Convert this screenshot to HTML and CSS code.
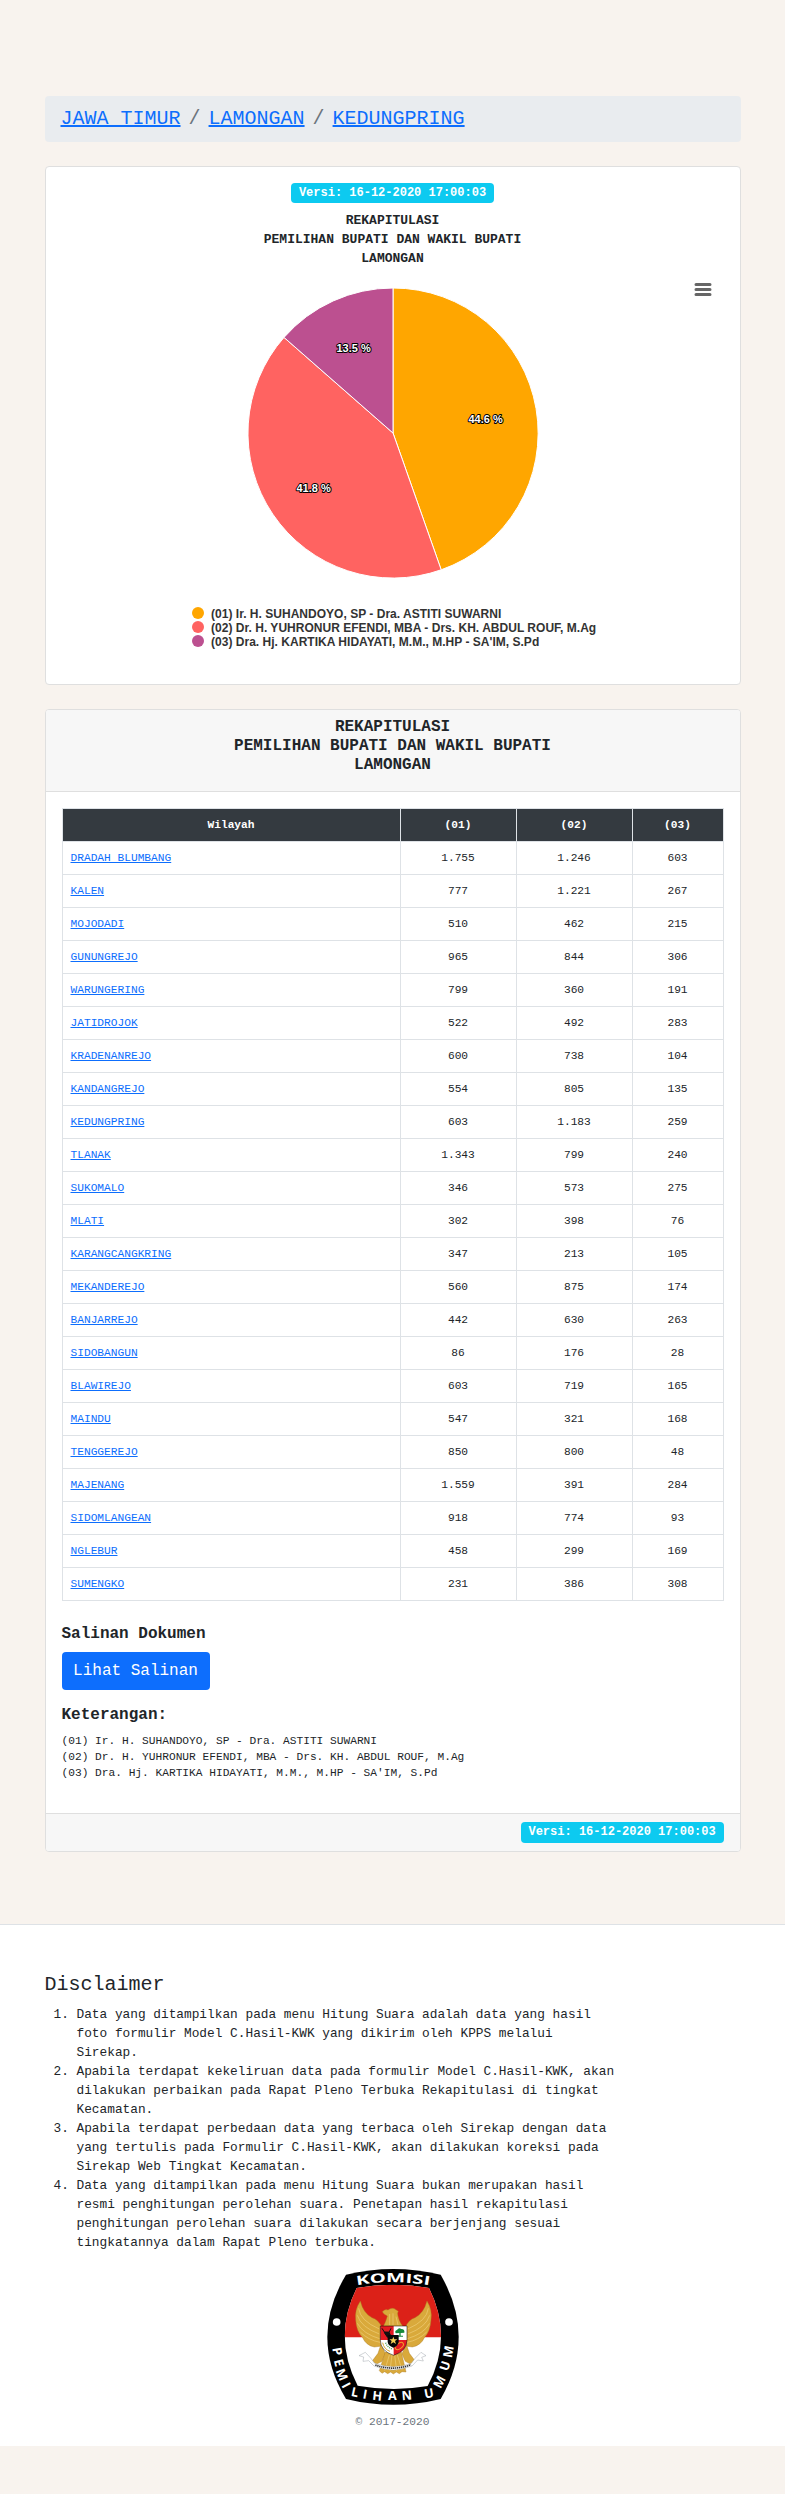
FILE: index.html
```html
<!DOCTYPE html>
<html lang="id">
<head>
<meta charset="utf-8">
<title>Rekapitulasi Pemilihan Bupati dan Wakil Bupati Lamongan</title>
<link rel="stylesheet" href="styles.css">
</head>
<body>
<main class="container">
  <nav class="breadcrumb">
    <a href="#">JAWA TIMUR</a><span class="sep">/</span><a href="#">LAMONGAN</a><span class="sep">/</span><a href="#">KEDUNGPRING</a>
  </nav>

  <section class="card chart-card">
    <div class="chart-head">
      <span class="badge">Versi: 16-12-2020 17:00:03</span>
      <h6 class="chart-title">REKAPITULASI<br>PEMILIHAN BUPATI DAN WAKIL BUPATI<br>LAMONGAN</h6>
    </div>
    <svg class="chart" viewBox="62 268 662 400" width="662" height="400">
      <g stroke="#fff" stroke-width="1" stroke-linejoin="round">
        <path fill="#ffa600" d="M393 433V288A145 145 0 0 1 441.2 569.8Z"/>
        <path fill="#ff6361" d="M393 433L441.2 569.8A145 145 0 0 1 284 337.4Z"/>
        <path fill="#bc5090" d="M393 433L284 337.4A145 145 0 0 1 393 288Z"/>
      </g>
      <g class="slice-label">
        <text x="468.5" y="423">44.6 %</text>
        <text x="296.5" y="492">41.8 %</text>
        <text x="336.5" y="352">13.5 %</text>
      </g>
      <path d="M696 284.5H710M696 289.5H710M696 294.5H710" stroke="#666" stroke-width="3" stroke-linecap="round"/>
      <circle cx="198" cy="613" r="6" fill="#ffa600"/>
      <circle cx="198" cy="627" r="6" fill="#ff6361"/>
      <circle cx="198" cy="641" r="6" fill="#bc5090"/>
      <g class="legend">
        <text x="211" y="618">(01) Ir. H. SUHANDOYO, SP - Dra. ASTITI SUWARNI</text>
        <text x="211" y="632">(02) Dr. H. YUHRONUR EFENDI, MBA - Drs. KH. ABDUL ROUF, M.Ag</text>
        <text x="211" y="646">(03) Dra. Hj. KARTIKA HIDAYATI, M.M., M.HP - SA'IM, S.Pd</text>
      </g>
    </svg>
  </section>

  <section class="card result-card">
    <header class="card-header">
      <h6>REKAPITULASI<br>PEMILIHAN BUPATI DAN WAKIL BUPATI<br>LAMONGAN</h6>
    </header>
    <div class="card-body">
      <table class="results">
        <colgroup><col class="c-name"><col class="c-num"><col class="c-num"><col class="c-last"></colgroup>
        <thead><tr><th>Wilayah</th><th>(01)</th><th>(02)</th><th>(03)</th></tr></thead>
        <tbody>
          <tr><td><a href="#">DRADAH BLUMBANG</a></td><td>1.755</td><td>1.246</td><td>603</td></tr>
          <tr><td><a href="#">KALEN</a></td><td>777</td><td>1.221</td><td>267</td></tr>
          <tr><td><a href="#">MOJODADI</a></td><td>510</td><td>462</td><td>215</td></tr>
          <tr><td><a href="#">GUNUNGREJO</a></td><td>965</td><td>844</td><td>306</td></tr>
          <tr><td><a href="#">WARUNGERING</a></td><td>799</td><td>360</td><td>191</td></tr>
          <tr><td><a href="#">JATIDROJOK</a></td><td>522</td><td>492</td><td>283</td></tr>
          <tr><td><a href="#">KRADENANREJO</a></td><td>600</td><td>738</td><td>104</td></tr>
          <tr><td><a href="#">KANDANGREJO</a></td><td>554</td><td>805</td><td>135</td></tr>
          <tr><td><a href="#">KEDUNGPRING</a></td><td>603</td><td>1.183</td><td>259</td></tr>
          <tr><td><a href="#">TLANAK</a></td><td>1.343</td><td>799</td><td>240</td></tr>
          <tr><td><a href="#">SUKOMALO</a></td><td>346</td><td>573</td><td>275</td></tr>
          <tr><td><a href="#">MLATI</a></td><td>302</td><td>398</td><td>76</td></tr>
          <tr><td><a href="#">KARANGCANGKRING</a></td><td>347</td><td>213</td><td>105</td></tr>
          <tr><td><a href="#">MEKANDEREJO</a></td><td>560</td><td>875</td><td>174</td></tr>
          <tr><td><a href="#">BANJARREJO</a></td><td>442</td><td>630</td><td>263</td></tr>
          <tr><td><a href="#">SIDOBANGUN</a></td><td>86</td><td>176</td><td>28</td></tr>
          <tr><td><a href="#">BLAWIREJO</a></td><td>603</td><td>719</td><td>165</td></tr>
          <tr><td><a href="#">MAINDU</a></td><td>547</td><td>321</td><td>168</td></tr>
          <tr><td><a href="#">TENGGEREJO</a></td><td>850</td><td>800</td><td>48</td></tr>
          <tr><td><a href="#">MAJENANG</a></td><td>1.559</td><td>391</td><td>284</td></tr>
          <tr><td><a href="#">SIDOMLANGEAN</a></td><td>918</td><td>774</td><td>93</td></tr>
          <tr><td><a href="#">NGLEBUR</a></td><td>458</td><td>299</td><td>169</td></tr>
          <tr><td><a href="#">SUMENGKO</a></td><td>231</td><td>386</td><td>308</td></tr>
        </tbody>
      </table>
      <h6>Salinan Dokumen</h6>
      <button class="btn" type="button">Lihat Salinan</button>
      <h6>Keterangan:</h6>
      <p class="notes">(01) Ir. H. SUHANDOYO, SP - Dra. ASTITI SUWARNI<br>(02) Dr. H. YUHRONUR EFENDI, MBA - Drs. KH. ABDUL ROUF, M.Ag<br>(03) Dra. Hj. KARTIKA HIDAYATI, M.M., M.HP - SA'IM, S.Pd</p>
    </div>
    <footer class="card-footer"><span class="badge">Versi: 16-12-2020 17:00:03</span></footer>
  </section>
</main>

<footer class="site-footer">
  <h5>Disclaimer</h5>
  <ol class="disclaimer">
    <li>Data yang ditampilkan pada menu Hitung Suara adalah data yang hasil foto formulir Model C.Hasil-KWK yang dikirim oleh KPPS melalui Sirekap.</li>
    <li>Apabila terdapat kekeliruan data pada formulir Model C.Hasil-KWK, akan dilakukan perbaikan pada Rapat Pleno Terbuka Rekapitulasi di tingkat Kecamatan.</li>
    <li>Apabila terdapat perbedaan data yang terbaca oleh Sirekap dengan data yang tertulis pada Formulir C.Hasil-KWK, akan dilakukan koreksi pada Sirekap Web Tingkat Kecamatan.</li>
    <li>Data yang ditampilkan pada menu Hitung Suara bukan merupakan hasil resmi penghitungan perolehan suara. Penetapan hasil rekapitulasi penghitungan perolehan suara dilakukan secara berjenjang sesuai tingkatannya dalam Rapat Pleno terbuka.</li>
  </ol>
  <div class="brand">
    <svg class="logo" viewBox="51 57 396 408" width="132" height="136">
      <defs>
        <path id="arcTop" d="M140 106Q250 86 362 107"/>
        <clipPath id="field"><path d="M140 114Q250 94 357 114Q431 262 353 408Q250 426 143 407Q67 262 140 114Z"/></clipPath>
      </defs>
      <path d="M108 74Q250 40 392 74Q500 262 392 447Q250 482 108 447Q-4 262 108 74Z"/>
      <g clip-path="url(#field)">
        <path fill="#fff" d="M60 90H440V440H60Z"/>
        <path fill="#dc2118" d="M60 90H440V262H60Z"/>
      </g>
      <circle cx="80" cy="216" r="11.5" fill="#fff"/>
      <circle cx="417" cy="216" r="11.5" fill="#fff"/>
      <g class="logo-text">
        <text><textPath href="#arcTop" textLength="220" lengthAdjust="spacingAndGlyphs">KOMISI</textPath></text>
        <text x="66.8 71.2 76.8 94.1 121.8 156.5 186 234 275.8 320 345 391.4 413.3 425.3" y="294.5 331.3 362.3 406.8 437 445 449 450.5 450.8 448 445.8 418 365 325" rotate="80 75 68 62 12 10 6 0 -5 -8 -10 -62 -72 -80">PEMILIHAN UMUM</text>
      </g>
      <g fill="#d9a93b" stroke="#a87820" stroke-width="1.2" stroke-linejoin="round">
        <path d="M151 153Q133 180 137 210Q139 245 158 263Q168 286 193 291L216 288V232Q205 208 186 203Q160 190 151 153Z"/>
        <path d="M351 153Q368 180 363 210Q361 245 343 263Q333 286 307 291L286 288V232Q296 208 315 203Q341 190 351 153Z"/>
        <path d="M214 240Q228 216 232 198L222 192L217 185Q226 176 234 180Q246 170 258 179L265 184Q260 190 264 198Q268 220 288 240Z"/>
        <path d="M214 280L204 310L186 334L200 342L216 334L226 312ZM288 280L298 310L316 334L302 342L286 334L276 312Z"/>
        <path d="M226 306L208 362L216 370L224 365L233 371L242 366L250 372L259 366L268 371L276 365L288 366L274 306Z"/>
      </g>
      <g fill="none" stroke="#f0cf78" stroke-width="2">
        <path d="M146 175Q150 212 208 237M142 196Q153 232 208 252M142 220Q160 252 209 266M151 246Q174 270 210 277M355 175Q351 212 293 237M359 196Q348 232 293 252M359 220Q341 252 292 266M350 246Q327 270 291 277"/>
        <path d="M238 315L224 362M246 315L240 362M254 315L260 362M262 315L276 360M239 192V225M249 190V225M258 200L264 225"/>
      </g>
      <path fill="#fff" stroke="#8a9299" stroke-width="1.2" d="M147 317L166 307L182 324L194 340Q222 350 250 350Q280 350 304 340L316 324L333 307L348 317L335 322L340 333L323 330L306 348Q278 358 250 360Q222 359 192 348L176 332L159 334L161 321Z"/>
      <path fill="none" stroke="#333" stroke-width="5" stroke-dasharray="4 2" d="M196 345Q250 364 303 344"/>
      <path fill="#fff" d="M211 228H291V270Q291 303 251 316Q211 303 211 270Z"/>
      <path fill="#e21b22" d="M211 228H251V270H211ZM251 270H291Q291 303 251 316Z"/>
      <path fill="none" stroke="#000" stroke-width="1.5" d="M211 228H291V270Q291 303 251 316Q211 303 211 270Z"/>
      <path fill="none" stroke="#111" stroke-width="3" d="M216 235L223 246L237 247L243 235M224 250L232 260L242 256"/>
      <path fill="#111" d="M221 246L238 245L243 256L232 263Z"/>
      <path fill="#168a3b" d="M257 250Q253 242 261 240Q266 232 274 237Q285 238 283 248L272 249V257H279V260H262V257H268V249Z"/>
      <path fill="none" stroke="#d9a93b" stroke-width="3" d="M218 278Q222 298 240 304"/>
      <path fill="none" stroke="#3b974d" stroke-width="4" stroke-dasharray="3 3" d="M227 278Q232 292 246 297"/>
      <ellipse cx="268" cy="288" rx="14" ry="8" transform="rotate(-38 268 288)" fill="none" stroke="#eea02b" stroke-width="3"/>
      <path fill="#080808" d="M233 255H266V276Q264 288 250 293Q234 287 233 276Z"/>
      <path fill="#f7cf57" d="M250 260L253 268H262L255 273L258 282L250 277L242 282L245 273L238 268H247Z"/>
    </svg>
    <small>© 2017-2020</small>
  </div>
</footer>
</body>
</html>
```
FILE: styles.css
```css
* { box-sizing: border-box; }
body {
  margin: 0;
  padding-top: 96px;
  background: #f8f3ee;
  color: #212529;
  font: 16px/1.5 "Liberation Mono", monospace;
}
a { color: #0d6efd; }
h5, h6 { margin: 0 0 8px; line-height: 1.2; }
h6 { font-size: 16px; font-weight: 700; }
h5 { font-size: 20px; font-weight: 500; }
.container { width: 696px; margin: 0 auto; }
.breadcrumb {
  display: flex;
  height: 46px;
  margin-bottom: 24px;
  padding: 8px 16px;
  background: #e9ecef;
  border-radius: 4px;
  font-size: 20px;
}
.sep { padding: 0 8px; color: #6c757d; }
.card {
  background: #fff;
  border: 1px solid #dfdfdf;
  border-radius: 4px;
  overflow: hidden;
}
.chart-card { height: 519px; margin-bottom: 24px; padding: 16px; }
.chart-head { display: flex; flex-direction: column; align-items: center; height: 85px; }
.badge {
  display: inline-block;
  padding: 4.2px 7.8px;
  border-radius: 4px;
  background: #0dcaf0;
  color: #fff;
  font-size: 12px;
  font-weight: 700;
  line-height: 1;
}
.chart-title { margin: 8px 0 0; font-size: 13px; line-height: 19px; text-align: center; }
.chart { display: block; }
.slice-label {
  font: bold 11px "Liberation Sans", sans-serif;
  fill: #fff;
  stroke: #000;
  stroke-width: 2px;
  stroke-linejoin: round;
  paint-order: stroke;
}
.legend { font: bold 12px "Liberation Sans", sans-serif; letter-spacing: .02px; fill: #333; }
.result-card { height: 1143px; display: flex; flex-direction: column; }
.card-header {
  height: 82px;
  padding: 8px 16px;
  background: #f7f7f7;
  border-bottom: 1px solid #dfdfdf;
  text-align: center;
}
.card-body { flex: 1; padding: 16px; }
.results {
  width: 662px;
  margin-bottom: 24px;
  border-collapse: collapse;
  table-layout: fixed;
  font-size: 11.2px;
}
.c-name { width: 338px; }
.c-num { width: 116px; }
.c-last { width: 91px; }
.results tr { height: 33px; }
.results th, .results td {
  padding: 0 8px;
  border: 1px solid #dee2e6;
  text-align: center;
  line-height: 16px;
}
.results td:first-child { text-align: left; }
.results th { background: #343a40; color: #fff; }
.btn {
  display: block;
  width: 148px;
  height: 38px;
  margin-bottom: 16px;
  padding: 0;
  border: 0;
  border-radius: 4px;
  background: #0d6efd;
  color: #fff;
  font: inherit;
}
.notes { margin: 0; font-size: 11.2px; line-height: 16px; }
.card-footer {
  display: flex;
  justify-content: flex-end;
  height: 38px;
  padding: 8px 16px;
  background: #f7f7f7;
  border-top: 1px solid #dfdfdf;
}
.card-footer .badge { height: 21px; }
.site-footer {
  height: 522px;
  margin-top: 72px;
  padding: 48px 44.5px 0;
  background: #fff;
  border-top: 1px solid #dee2e6;
}
.disclaimer {
  width: 573px;
  margin: 0 0 17px;
  padding-left: 32px;
  font-size: 12.8px;
  line-height: 19px;
}
.brand { display: flex; flex-direction: column; align-items: center; }
.logo { display: block; }
.logo-text { font: bold 38px "Open Sans", sans-serif; fill: #fff; }
.brand small { margin-top: 9px; color: #6c757d; font-size: 11.2px; line-height: 17px; }
```
